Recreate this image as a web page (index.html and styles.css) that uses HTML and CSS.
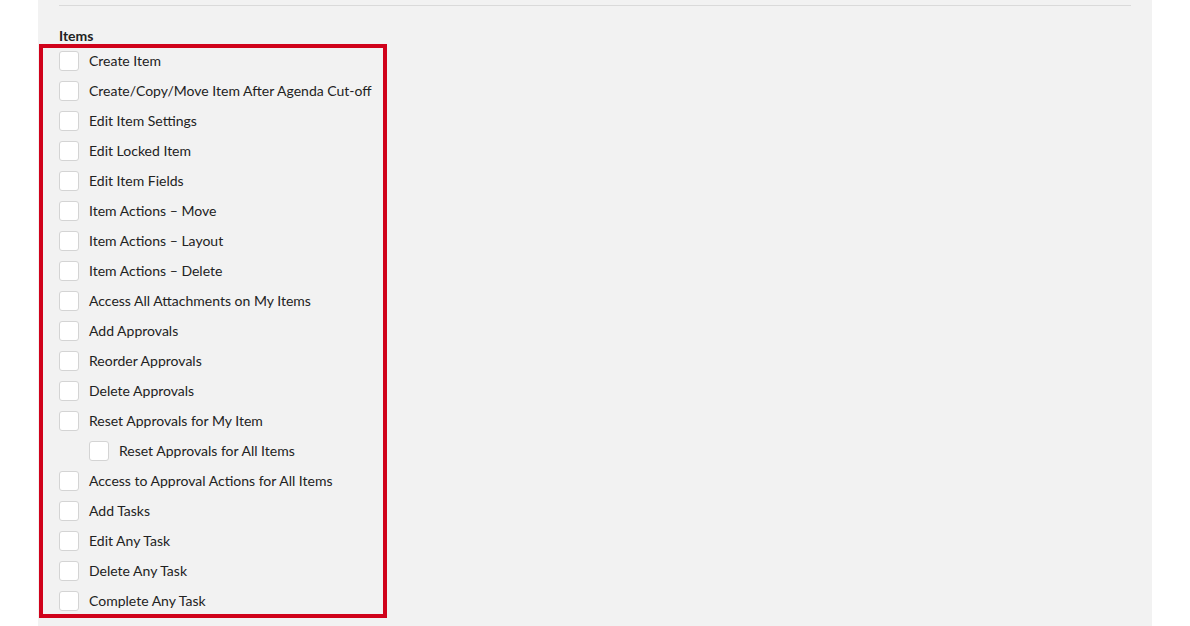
FILE: index.html
```html
<!DOCTYPE html>
<html lang="en">
<head>
    <meta charset="UTF-8">
    <meta name="viewport" content="width=device-width, initial-scale=1.0">
    <title>Role Permissions</title>
    <link rel="stylesheet" href="styles.css">
</head>
<body>
    <div class="permissions-panel">
        <hr class="divider">
        <h4 class="group-title">Items</h4>
        <div class="permission-group highlighted">
            <label class="permission"><input type="checkbox"><span class="box"></span><span class="name">Create Item</span></label>
            <label class="permission"><input type="checkbox"><span class="box"></span><span class="name">Create/Copy/Move Item After Agenda Cut-off</span></label>
            <label class="permission"><input type="checkbox"><span class="box"></span><span class="name">Edit Item Settings</span></label>
            <label class="permission"><input type="checkbox"><span class="box"></span><span class="name">Edit Locked Item</span></label>
            <label class="permission"><input type="checkbox"><span class="box"></span><span class="name">Edit Item Fields</span></label>
            <label class="permission"><input type="checkbox"><span class="box"></span><span class="name">Item Actions – Move</span></label>
            <label class="permission"><input type="checkbox"><span class="box"></span><span class="name">Item Actions – Layout</span></label>
            <label class="permission"><input type="checkbox"><span class="box"></span><span class="name">Item Actions – Delete</span></label>
            <label class="permission"><input type="checkbox"><span class="box"></span><span class="name">Access All Attachments on My Items</span></label>
            <label class="permission"><input type="checkbox"><span class="box"></span><span class="name">Add Approvals</span></label>
            <label class="permission"><input type="checkbox"><span class="box"></span><span class="name">Reorder Approvals</span></label>
            <label class="permission"><input type="checkbox"><span class="box"></span><span class="name">Delete Approvals</span></label>
            <label class="permission"><input type="checkbox"><span class="box"></span><span class="name">Reset Approvals for My Item</span></label>
            <label class="permission sub"><input type="checkbox"><span class="box"></span><span class="name">Reset Approvals for All Items</span></label>
            <label class="permission"><input type="checkbox"><span class="box"></span><span class="name">Access to Approval Actions for All Items</span></label>
            <label class="permission"><input type="checkbox"><span class="box"></span><span class="name">Add Tasks</span></label>
            <label class="permission"><input type="checkbox"><span class="box"></span><span class="name">Edit Any Task</span></label>
            <label class="permission"><input type="checkbox"><span class="box"></span><span class="name">Delete Any Task</span></label>
            <label class="permission"><input type="checkbox"><span class="box"></span><span class="name">Complete Any Task</span></label>
        </div>
    </div>
</body>
</html>
```

FILE: styles.css
```css
body {
    margin: 0;
    background: #fff;
    font-family: Lato, "Open Sans", sans-serif;
    color: #222;
}

.permissions-panel {
    margin-left: 38px;
    width: 1114px;
    height: 626px;
    box-sizing: border-box;
    padding: 5px 21px 0 21px;
    background: #f2f2f2;
}

.divider {
    margin: 0;
    border: 0;
    border-top: 1px solid #dadada;
}

.group-title {
    margin: 22px 0 0 0;
    font-size: 14px;
    line-height: 16px;
    font-weight: bold;
    color: #222;
}

.permission-group {
    display: flex;
    flex-direction: column;
    gap: 10px;
    width: 348px;
    margin-left: -20px;
    padding: 3px 0 3px 16px;
    box-sizing: border-box;
}

.highlighted {
    border: 4px solid #d0021b;
}

.permission {
    display: flex;
    align-items: center;
    height: 20px;
    font-size: 14px;
    cursor: pointer;
}

.permission .name {
    line-height: 16px;
}

.permission.sub {
    padding-left: 30px;
}

.permission input {
    display: none;
}

.box {
    width: 20px;
    height: 20px;
    box-sizing: border-box;
    margin-right: 10px;
    background: #fff;
    border: 1px solid #d4d4d4;
    border-radius: 3px;
}

input:checked + .box {
    background: #d0021b;
    border-color: #d0021b;
}
```
